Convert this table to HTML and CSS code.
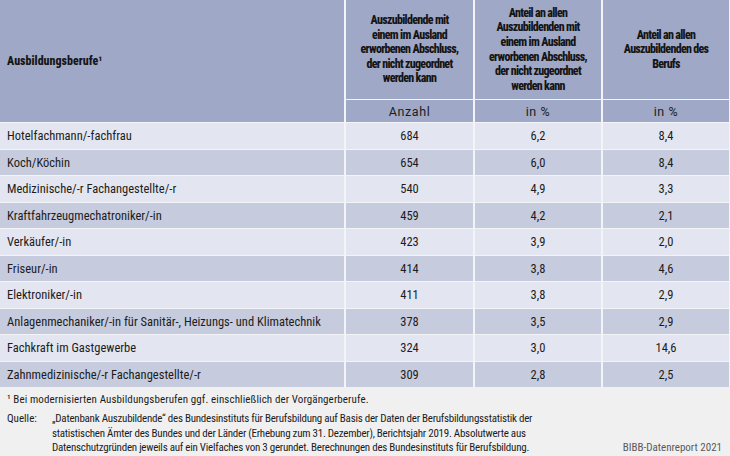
FILE: index.html
```html
<!DOCTYPE html>
<html lang="de">
<head>
<meta charset="utf-8">
<title>Ausbildungsberufe</title>
<link rel="stylesheet" href="styles.css">
</head>
<body>
<div class="page">
  <div class="grid">
    <div class="cell head first">Ausbildungsberufe¹</div>
    <div class="cell head center">Auszubildende mit<br>einem im Ausland<br>erworbenen Abschluss,<br>der nicht zugeordnet<br>werden kann</div>
    <div class="cell head center">Anteil an allen<br>Auszubildenden mit<br>einem im Ausland<br>erworbenen Abschluss,<br>der nicht zugeordnet<br>werden kann</div>
    <div class="cell head center">Anteil an allen<br>Auszubildenden des<br>Berufs</div>
    <div class="cell unit">Anzahl</div>
    <div class="cell unit">in %</div>
    <div class="cell unit">in %</div>

    <div class="cell light name">Hotelfachmann/-fachfrau</div>
    <div class="cell light num">684</div>
    <div class="cell light num">6,2</div>
    <div class="cell light num">8,4</div>

    <div class="cell dark name">Koch/Köchin</div>
    <div class="cell dark num">654</div>
    <div class="cell dark num">6,0</div>
    <div class="cell dark num">8,4</div>

    <div class="cell light name">Medizinische/-r Fachangestellte/-r</div>
    <div class="cell light num">540</div>
    <div class="cell light num">4,9</div>
    <div class="cell light num">3,3</div>

    <div class="cell dark name">Kraftfahrzeugmechatroniker/-in</div>
    <div class="cell dark num">459</div>
    <div class="cell dark num">4,2</div>
    <div class="cell dark num">2,1</div>

    <div class="cell light name">Verkäufer/-in</div>
    <div class="cell light num">423</div>
    <div class="cell light num">3,9</div>
    <div class="cell light num">2,0</div>

    <div class="cell dark name">Friseur/-in</div>
    <div class="cell dark num">414</div>
    <div class="cell dark num">3,8</div>
    <div class="cell dark num">4,6</div>

    <div class="cell light name">Elektroniker/-in</div>
    <div class="cell light num">411</div>
    <div class="cell light num">3,8</div>
    <div class="cell light num">2,9</div>

    <div class="cell dark name">Anlagenmechaniker/-in für Sanitär-, Heizungs- und Klimatechnik</div>
    <div class="cell dark num">378</div>
    <div class="cell dark num">3,5</div>
    <div class="cell dark num">2,9</div>

    <div class="cell light name">Fachkraft im Gastgewerbe</div>
    <div class="cell light num">324</div>
    <div class="cell light num">3,0</div>
    <div class="cell light num">14,6</div>

    <div class="cell dark name">Zahnmedizinische/-r Fachangestellte/-r</div>
    <div class="cell dark num">309</div>
    <div class="cell dark num">2,8</div>
    <div class="cell dark num">2,5</div>
  </div>

  <div class="footer">
    <p class="note">¹ Bei modernisierten Ausbildungsberufen ggf. einschließlich der Vorgängerberufe.</p>
    <div class="source">
      <span class="label">Quelle:</span>
      <p class="text">„Datenbank Auszubildende“ des Bundesinstituts für Berufsbildung auf Basis der Daten der Berufsbildungsstatistik der<br>statistischen Ämter des Bundes und der Länder (Erhebung zum 31. Dezember), Berichtsjahr 2019. Absolutwerte aus<br>Datenschutzgründen jeweils auf ein Vielfaches von 3 gerundet. Berechnungen des Bundesinstituts für Berufsbildung.</p>
      <span class="brand">BIBB-Datenreport 2021</span>
    </div>
  </div>
</div>
</body>
</html>
```

FILE: styles.css
```css
html, body {
  margin: 0;
  padding: 0;
}

body {
  width: 730px;
  height: 456px;
  overflow: hidden;
  background: #f0f0f0;
  font-family: Roboto, "Liberation Sans", sans-serif;
  font-stretch: 87%;
  font-size: 12.5px;
  color: #1c1c1c;
  white-space: nowrap;
}

.page {
  width: 730px;
  height: 456px;
  display: flex;
  flex-direction: column;
}

.grid {
  display: grid;
  grid-template-columns: 344px 127px 126px 126px;
  grid-template-rows: 99px 22px repeat(10, 25.5px);
  column-gap: 2px;
  row-gap: 1px;
  background: #f3f4f8;
  padding-right: 1px;
}

.cell {
  display: flex;
  align-items: center;
}

.head {
  background: #9fa8c7;
  font-weight: 800;
  line-height: 14.6px;
  color: #151515;
}

.head.first {
  grid-row: span 2;
  padding-left: 7px;
  font-size: 12px;
  font-stretch: 85%;
}

.head.center {
  justify-content: center;
  text-align: center;
  font-size: 12px;
  font-stretch: 75%;
  letter-spacing: -0.7px;
}

.unit {
  background: #9fa8c7;
  justify-content: center;
  font-stretch: 95%;
  letter-spacing: 0.6px;
}

.light {
  background: #e3e6f0;
}

.dark {
  background: #c6cbde;
}

.name {
  padding-left: 7px;
}

.num {
  justify-content: center;
}

.footer {
  flex: 1;
  background: #f0f0f0;
  padding: 6px 8px 0 7px;
  font-size: 11px;
  font-stretch: 75%;
  line-height: 14.5px;
}

.note {
  margin: 0 0 4.5px 0;
  letter-spacing: 0.1px;
}

.source {
  display: flex;
  align-items: flex-end;
}

.label {
  width: 45px;
  flex: none;
  align-self: flex-start;
}

.text {
  margin: 0;
  flex: 1;
  letter-spacing: -0.25px;
}

.brand {
  color: #5a5a5a;
  font-stretch: 80%;
}
```
